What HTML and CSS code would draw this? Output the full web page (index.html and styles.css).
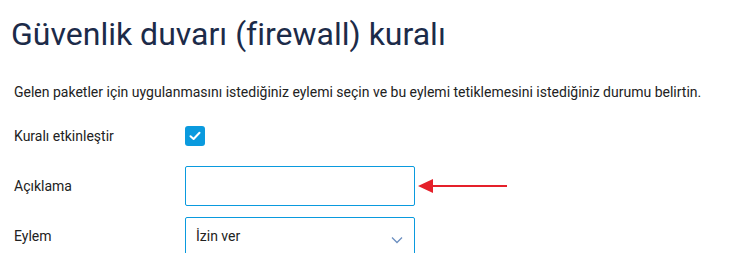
FILE: index.html
```html
<!DOCTYPE html>
<html lang="tr">
<head>
<meta charset="utf-8">
<link rel="stylesheet" href="styles.css">
</head>
<body>
<main class="page">
  <h1 class="title">Güvenlik duvarı (firewall) kuralı</h1>
  <p class="intro">Gelen paketler için uygulanmasını istediğiniz eylemi seçin ve bu eylemi tetiklemesini istediğiniz durumu belirtin.</p>
  <div class="form">
    <div class="row row-check">
      <span class="label">Kuralı etkinleştir</span>
      <span class="checkbox">
        <svg width="12" height="10" viewBox="0 0 12 10"><path d="M1.5 5.2 L4.6 8 L10.5 1.8" fill="none" stroke="#fff" stroke-width="2" stroke-linecap="round" stroke-linejoin="round"/></svg>
      </span>
    </div>
    <div class="row row-input">
      <span class="label">Açıklama</span>
      <div class="field"><input class="input" type="text"></div>
      <span class="arrow">
        <svg width="90" height="16" viewBox="0 0 90 16"><polygon points="0,8 15,1 15,15" fill="#e5202a"/><line x1="12" y1="8" x2="89" y2="8" stroke="#e5202a" stroke-width="2"/></svg>
      </span>
    </div>
    <div class="row row-select">
      <span class="label">Eylem</span>
      <div class="select">
        <span class="select-text">İzin ver</span>
        <svg class="chev" width="12" height="8" viewBox="0 0 12 8"><path d="M1 1.5 L6 6.5 L11 1.5" fill="none" stroke="#6c8fc0" stroke-width="1.3"/></svg>
      </div>
    </div>
  </div>
</main>
</body>
</html>
```

FILE: styles.css
```css
html, body {
  margin: 0;
  padding: 0;
  background: #fff;
}
body {
  font-family: Roboto, "Noto Sans", Arial, sans-serif;
  color: #222;
}
.page {
  padding: 0 0 0 14px;
}
.title {
  margin: 0;
  padding-top: 14px;
  margin-left: -3px;
  font-size: 32px;
  font-weight: 400;
  line-height: 40px;
  color: #1c2b49;
}
.intro {
  margin: 28px 0 0;
  font-size: 14px;
  line-height: 20px;
  color: #222;
}
.form {
  margin-top: 24px;
  display: flex;
  flex-direction: column;
}
.row {
  display: flex;
  align-items: center;
}
.label {
  width: 171px;
  font-size: 14px;
  color: #222;
}
.row-check {
  height: 20px;
}
.checkbox {
  width: 20px;
  height: 20px;
  border-radius: 3px;
  background: #0a9ade;
  display: flex;
  align-items: center;
  justify-content: center;
}
.row-input {
  margin-top: 20px;
}
.input {
  box-sizing: border-box;
  width: 230px;
  height: 40px;
  border: 1px solid #0a9ade;
  border-radius: 2px;
  margin: 0;
  outline: none;
  font: inherit;
}
.arrow {
  display: flex;
  margin-left: 3px;
}
.row-select {
  margin-top: 11px;
  align-items: flex-start;
}
.row-select .label {
  padding-top: 11px;
}
.select {
  box-sizing: border-box;
  width: 230px;
  height: 40px;
  border: 1px solid #0a9ade;
  border-radius: 2px;
  display: flex;
  align-items: center;
  justify-content: space-between;
  padding: 0 11px 0 10px;
}
.select-text {
  font-size: 14px;
  color: #222;
  margin-top: -3px;
}
.chev {
  margin-top: 6px;
}
```
